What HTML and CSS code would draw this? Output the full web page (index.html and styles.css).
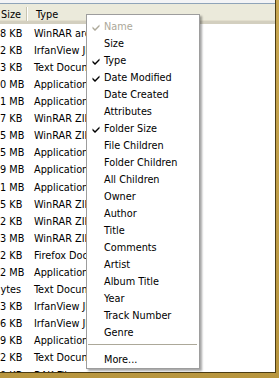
FILE: index.html
```html
<!DOCTYPE html>
<html>
<head>
<meta charset="utf-8">
<link rel="stylesheet" href="styles.css">
</head>
<body>
<div class="frame">
  <div class="window">
    <div class="topstrip"></div>
    <div class="header">
      <div class="hcell size">Size</div>
      <div class="hsep"></div>
      <div class="hcell type">Type</div>
    </div>
    <div class="rows">
      <div class="row"><span class="c-size">8 KB</span><span class="c-type">WinRAR archive</span></div>
      <div class="row"><span class="c-size">2 KB</span><span class="c-type">IrfanView JPG File</span></div>
      <div class="row"><span class="c-size">3 KB</span><span class="c-type">Text Document</span></div>
      <div class="row"><span class="c-size">0 MB</span><span class="c-type">Application</span></div>
      <div class="row"><span class="c-size">1 MB</span><span class="c-type">Application</span></div>
      <div class="row"><span class="c-size">7 KB</span><span class="c-type">WinRAR ZIP archive</span></div>
      <div class="row"><span class="c-size">5 MB</span><span class="c-type">WinRAR ZIP archive</span></div>
      <div class="row"><span class="c-size">5 MB</span><span class="c-type">Application</span></div>
      <div class="row"><span class="c-size">9 MB</span><span class="c-type">Application</span></div>
      <div class="row"><span class="c-size">1 MB</span><span class="c-type">Application</span></div>
      <div class="row"><span class="c-size">5 KB</span><span class="c-type">WinRAR ZIP archive</span></div>
      <div class="row"><span class="c-size">2 KB</span><span class="c-type">WinRAR ZIP archive</span></div>
      <div class="row"><span class="c-size">3 MB</span><span class="c-type">WinRAR ZIP archive</span></div>
      <div class="row"><span class="c-size">2 KB</span><span class="c-type">Firefox Document</span></div>
      <div class="row"><span class="c-size">2 MB</span><span class="c-type">Application</span></div>
      <div class="row"><span class="c-size">ytes</span><span class="c-type">Text Document</span></div>
      <div class="row"><span class="c-size">3 KB</span><span class="c-type">IrfanView JPG File</span></div>
      <div class="row"><span class="c-size">6 KB</span><span class="c-type">IrfanView JPG File</span></div>
      <div class="row"><span class="c-size">9 KB</span><span class="c-type">Application</span></div>
      <div class="row"><span class="c-size">2 KB</span><span class="c-type">Text Document</span></div>
      <div class="row"><span class="c-size">0 KB</span><span class="c-type">BAK File</span></div>
    </div>

    <div class="menu">
      <div class="item disabled checked"><svg class="check" viewBox="0 0 7 7" width="7" height="7"><polygon points="0,2.5 2.5,5 7,0.5 7,2.5 2.5,7 0,4.5"/></svg>Name</div>
      <div class="item">Size</div>
      <div class="item checked"><svg class="check" viewBox="0 0 7 7" width="7" height="7"><polygon points="0,2.5 2.5,5 7,0.5 7,2.5 2.5,7 0,4.5"/></svg>Type</div>
      <div class="item checked"><svg class="check" viewBox="0 0 7 7" width="7" height="7"><polygon points="0,2.5 2.5,5 7,0.5 7,2.5 2.5,7 0,4.5"/></svg>Date Modified</div>
      <div class="item">Date Created</div>
      <div class="item">Attributes</div>
      <div class="item checked"><svg class="check" viewBox="0 0 7 7" width="7" height="7"><polygon points="0,2.5 2.5,5 7,0.5 7,2.5 2.5,7 0,4.5"/></svg>Folder Size</div>
      <div class="item">File Children</div>
      <div class="item">Folder Children</div>
      <div class="item">All Children</div>
      <div class="item">Owner</div>
      <div class="item">Author</div>
      <div class="item">Title</div>
      <div class="item">Comments</div>
      <div class="item">Artist</div>
      <div class="item">Album Title</div>
      <div class="item">Year</div>
      <div class="item">Track Number</div>
      <div class="item">Genre</div>
      <div class="sep"></div>
      <div class="item">More...</div>
    </div>
  </div>
</div>
</body>
</html>
```

FILE: styles.css
```css
html, body {
  margin: 0;
  padding: 0;
  background: #c3a24d;
}
body {
  font-family: "DejaVu Sans Condensed", "DejaVu Sans", sans-serif;
  font-stretch: semi-condensed;
  font-size: 10.8px;
  color: #000;
}
.frame {
  width: 279px;
  height: 378px;
  background: linear-gradient(#c8a752, #b8963f);
}
.window {
  position: relative;
  width: 275px;
  height: 372px;
  background: #fff;
  border-right: 1px solid #4b3c14;
  border-bottom: 1px solid #4b3c14;
  overflow: hidden;
}
.topstrip {
  height: 3px;
  background: #f3f4f6;
  border-bottom: 1px solid #8fa4b9;
}
.header {
  display: flex;
  align-items: center;
  height: 17px;
  background: #ebeadb;
  border-bottom: 3px solid #d3cfbf;
  box-shadow: inset 0 -1px 0 #e2decd;
}
.hcell {
  line-height: 17px;
  padding-top: 3px;
}
.hcell.size {
  width: 21px;
  text-align: right;
  padding-right: 5px;
}
.hsep {
  width: 1px;
  height: 14px;
  background: #c7c5b2;
  border-right: 1px solid #fff;
  margin-top: 3px;
}
.hcell.type {
  padding-left: 8px;
}
.rows {
  padding-top: 0.7px;
}
.row {
  display: flex;
  height: 17.1px;
  line-height: 17px;
  white-space: nowrap;
}
.c-size {
  width: 21px;
  text-align: right;
  flex: none;
}
.c-type {
  padding-left: 13px;
}
.menu {
  position: absolute;
  left: 86px;
  top: 14px;
  width: 112px;
  background: #fff;
  border: 1px solid #9d9d9d;
  box-shadow: 2px 2px 2px rgba(0, 0, 0, 0.35);
  padding: 3px 0 0 0;
}
.item {
  position: relative;
  height: 17px;
  line-height: 17px;
  padding-left: 17px;
  white-space: nowrap;
}
.item.disabled {
  color: #aca899;
}
.check {
  position: absolute;
  left: 5px;
  top: 6px;
  width: 8px;
  height: 7px;
  fill: #000;
}
.disabled .check {
  fill: #aca899;
}
.sep {
  height: 1px;
  background: #aca899;
  margin: 3px 2px 6px 1px;
}
```
